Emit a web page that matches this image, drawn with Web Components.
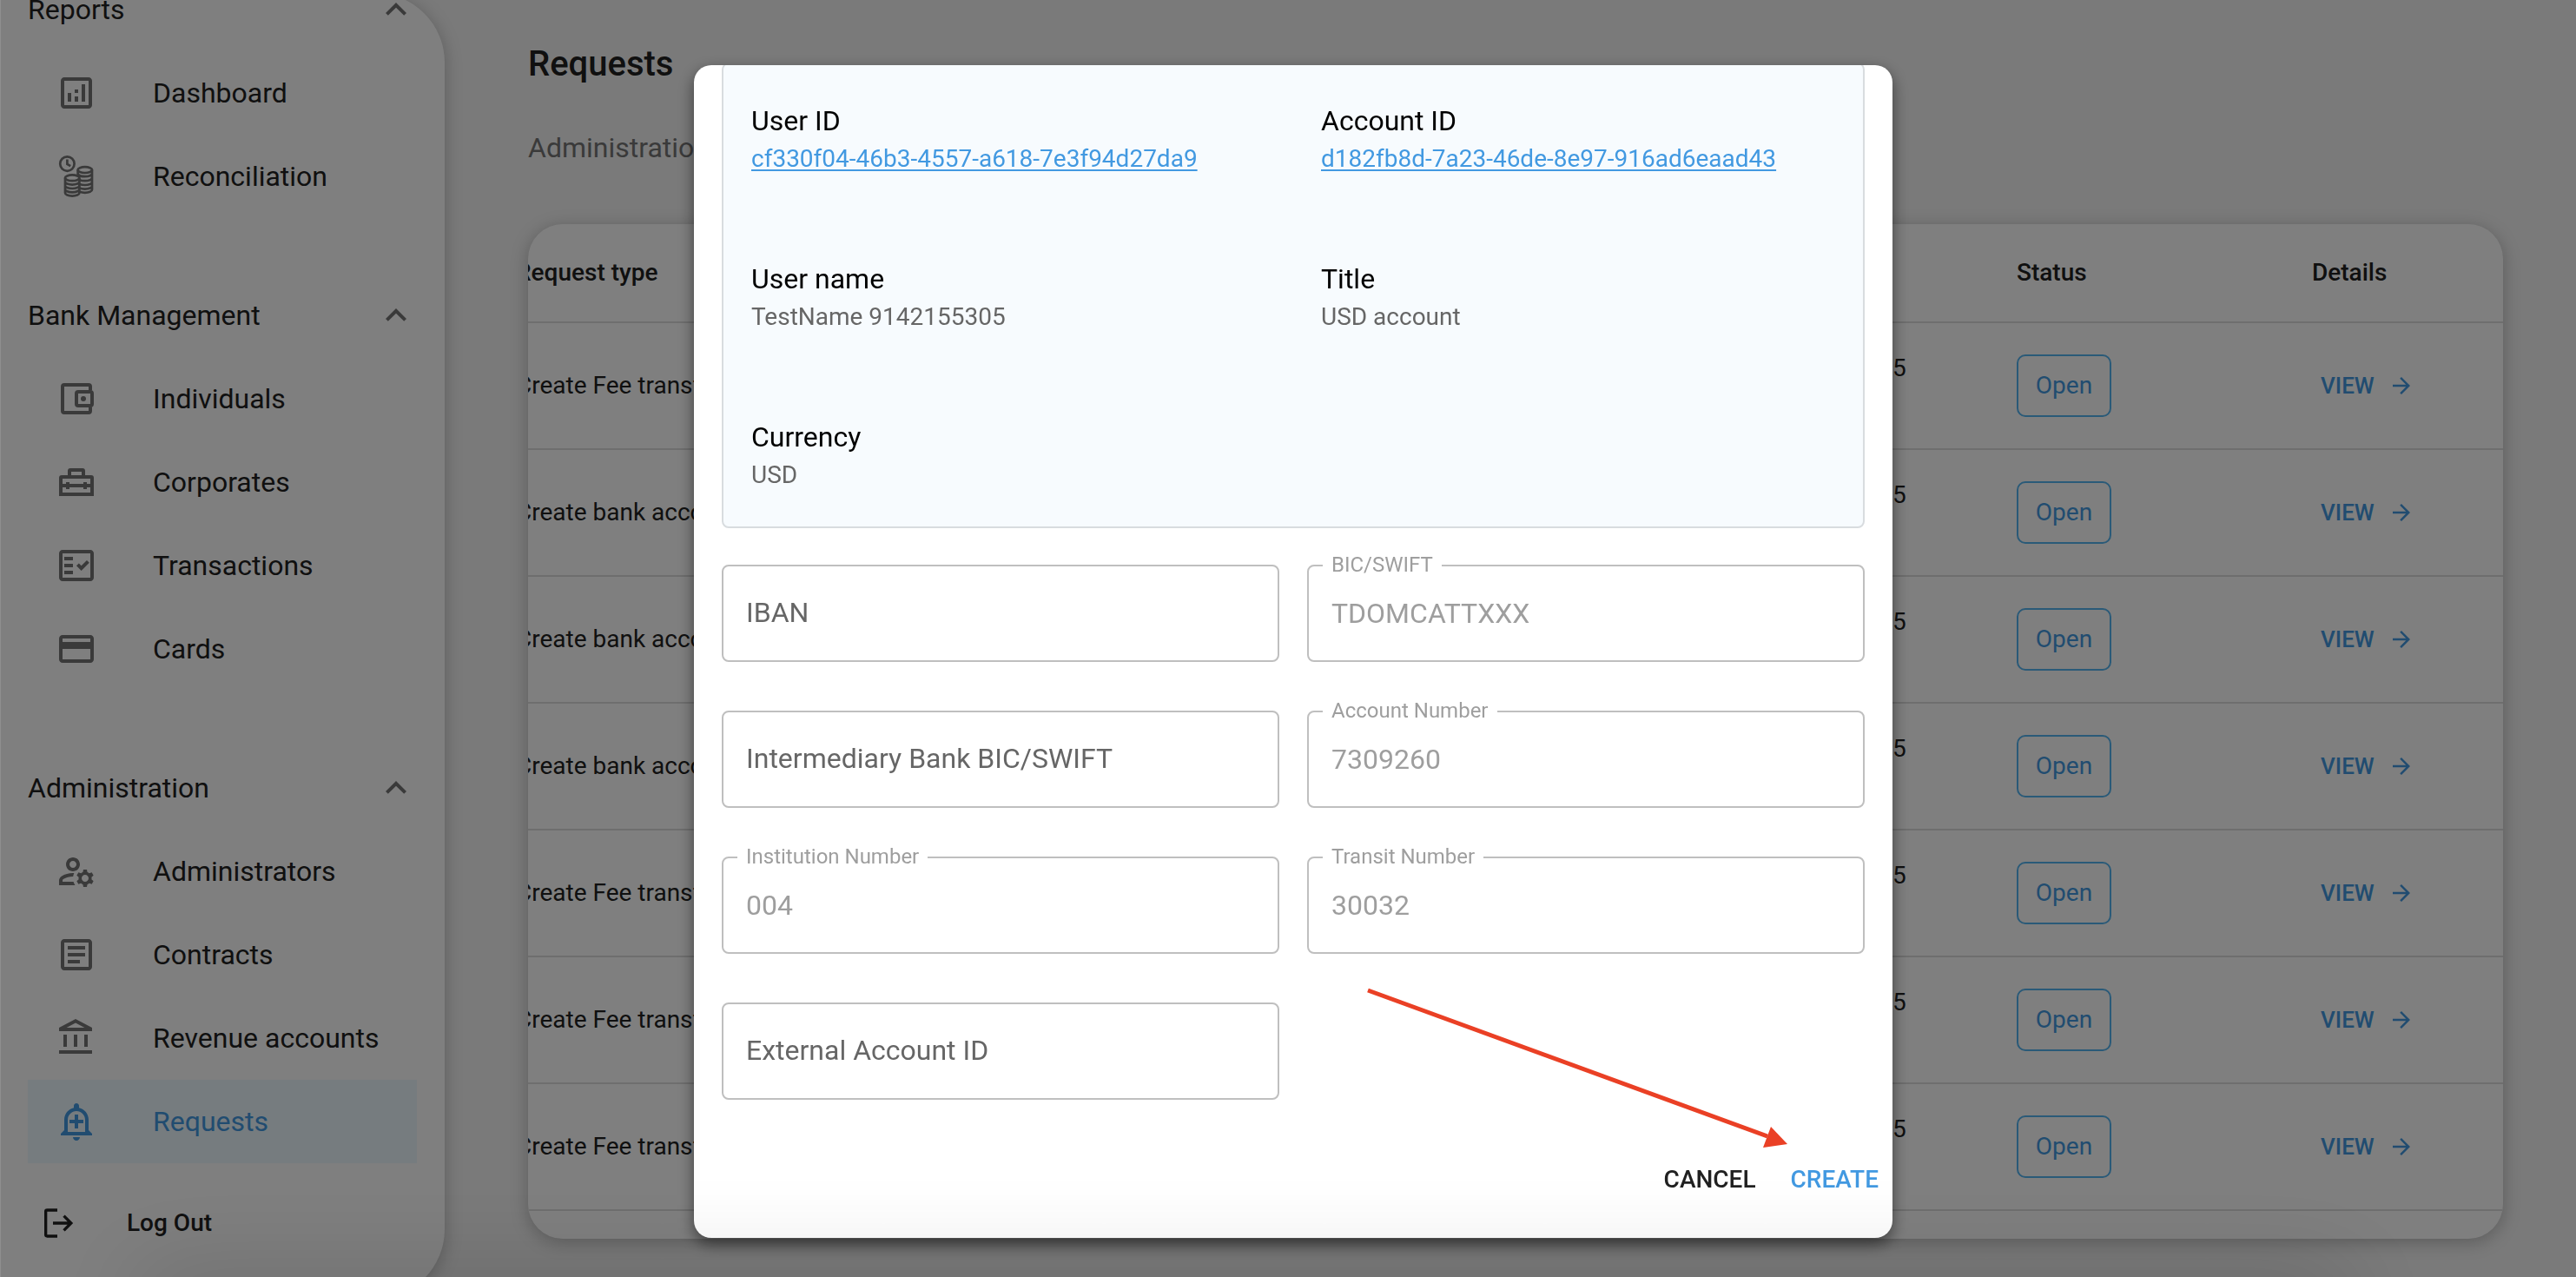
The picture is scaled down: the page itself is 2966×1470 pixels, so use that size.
<!DOCTYPE html>
<html lang="en">
<head>
<meta charset="utf-8">
<title>Requests</title>
<style>
html, body { margin: 0; height: 100%; overflow: hidden; }
body { font-family: Roboto, "Liberation Sans", sans-serif; font-size: 32px; line-height: 48px; color: #212121; background: #f4f4f4; }
</style>
</head>
<body>
<bank-app></bank-app>
<script>
const ICONS = {
  dashboard: '<path d="M9 17H7v-5h2v5zm4 0h-2v-3h2v3zm0-5h-2v-2h2v2zm4 5h-2V7h2v10zm2 2H5V5h14v14zm0-16H5c-1.1 0-2 .9-2 2v14c0 1.1.9 2 2 2h14c1.100 0 2-.9 2-2V5c0-1.100-.9-2-2-2z"/>',
  coins: '<g fill="none" stroke="currentColor" stroke-width="1.35"><circle cx="6.700" cy="4.800" r="4.100"/><path d="M6.700 2.300v2.700l1.900 1.100"/><ellipse cx="9.600" cy="12.900" rx="4.100" ry="1.700"/><path d="M5.500 12.900v8.600c0 1 1.800 1.800 4.100 1.800s4.100-.8 4.100-1.800v-8.600M5.500 15c0 1 1.800 1.800 4.100 1.800s4.100-.8 4.100-1.800M5.500 17.200c0 1 1.800 1.800 4.100 1.800s4.100-.8 4.100-1.800M5.500 19.400c0 1 1.800 1.800 4.100 1.800s4.100-.8 4.100-1.800"/><ellipse cx="16.900" cy="8.300" rx="4.100" ry="1.700"/><path d="M12.800 8.300v3M21 8.300v11.300c0 1-1.800 1.800-4.100 1.800-1.200 0-2.200-.2-3-.5M12.900 10.700c.4.900 2 1.400 4 1.400 2.300 0 4.100-.8 4.100-1.800M13.800 14.100c.8.300 1.900.5 3.100.5 2.300 0 4.100-.8 4.100-1.800M13.800 16.500c.8.300 1.900.5 3.100.5 2.300 0 4.100-.8 4.100-1.800M13.800 18.800c.8.300 1.900.5 3.100.5 2.300 0 4.100-.8 4.100-1.800"/></g>',
  wallet: '<path d="M20 7.200V5a1 1 0 0 0-1-1H5a1 1 0 0 0-1 1v14a1 1 0 0 0 1 1h14a1 1 0 0 0 1-1v-2.200" fill="none" stroke="currentColor" stroke-width="2"/><rect x="12" y="8" width="9" height="8" rx="1" fill="none" stroke="currentColor" stroke-width="2"/><circle cx="16" cy="12" r="1.500"/>',
  toolbox: '<path fill="none" stroke="currentColor" stroke-width="2" d="M3 19h18V9.500a.5.5 0 0 0-.5-.5h-17a.5.500 0 0 0-.5.5zM8 9V5.500a.5.5 0 0 1 .5-.5h7a.5.5 0 0 1 .5.5V9M3 14h18M7 12v4M17 12v4"/>',
  check: '<path d="M20 3H4c-1.100 0-2 .9-2 2v14c0 1.100.9 2 2 2h16c1.100 0 2-.9 2-2V5c0-1.100-.9-2-2-2zm0 16H4V5h16v14z" fill-rule="evenodd"/><path d="M19.410 10.420 17.990 9l-3.170 3.170-1.410-1.420L12 12.160 14.820 15zM5 7h5v2H5zM5 11h5v2H5zM5 15h5v2H5z"/>',
  card: '<path d="M20 4H4c-1.110 0-1.990.890-1.990 2L2 18c0 1.110.890 2 2 2h16c1.110 0 2-.890 2-2V6c0-1.110-.890-2-2-2zm0 14H4v-6h16v6zm0-10H4V6h16v2z"/>',
  admins: '<path d="M4 18v-.65c0-.34.16-.66.41-.81C6.100 15.530 8.030 15 10 15c.030 0 .050 0 .080.010.100-.700.300-1.370.590-1.980-.220-.020-.440-.030-.670-.030-2.420 0-4.680.670-6.610 1.820-.880.520-1.390 1.500-1.390 2.530V20h9.260c-.420-.600-.750-1.280-.970-2H4zM10 12c2.210 0 4-1.790 4-4s-1.790-4-4-4-4 1.790-4 4 1.790 4 4 4zm0-6c1.100 0 2 .9 2 2s-.9 2-2 2-2-.9-2-2 .9-2 2-2zM20.750 16c0-.220-.030-.420-.060-.630l1.140-1.010-1-1.730-1.450.490c-.320-.270-.680-.480-1.080-.630L18 11h-2l-.300 1.490c-.400.150-.760.360-1.080.630l-1.450-.490-1 1.730 1.140 1.010c-.030.210-.060.410-.060.630s.030.420.060.630l-1.140 1.010 1 1.730 1.450-.490c.320.270.680.480 1.080.630L16 21h2l.300-1.490c.400-.150.760-.360 1.080-.630l1.450.490 1-1.730-1.140-1.010c.030-.210.060-.410.060-.630zM17 18c-1.100 0-2-.9-2-2s.9-2 2-2 2 .9 2 2-.9 2-2 2z"/>',
  article: '<path d="M19 5v14H5V5h14m0-2H5c-1.100 0-2 .9-2 2v14c0 1.100.9 2 2 2h14c1.100 0 2-.9 2-2V5c0-1.100-.9-2-2-2zM14 17H7v-2h7v2zm3-4H7v-2h10v2zm0-4H7V7h10v2z"/>',
  bank: '<path d="M6.500 10h-2v7h2v-7zm6 0h-2v7h2v-7zm8.500 9H2v2h19v-2zm-2.500-9h-2v7h2v-7zm-7-6.740L16.710 6H6.290l5.210-2.740m0-2.260L2 6v2h19V6l-9.500-5z"/>',
  bell: '<path d="M10.010 21.010c0 1.100.890 1.990 1.990 1.990s1.990-.890 1.990-1.990h-3.980zM12 6c2.760 0 5 2.240 5 5v7H7v-7c0-2.760 2.240-5 5-5zm0-4.500c-.830 0-1.500.670-1.500 1.500v1.170C7.360 4.850 5 7.650 5 11v6l-2 2v1h18v-1l-2-2v-6c0-3.350-2.360-6.150-5.500-6.830V3c0-.830-.670-1.500-1.500-1.500zM13 8h-2v3H8v2h3v3h2v-3h3v-2h-3z"/>',
  logout: '<path fill="none" stroke="currentColor" stroke-width="2" d="M12 3H5a1 1 0 0 0-1 1v16a1 1 0 0 0 1 1h7M9 12h12M16.500 7l5 5-5 5"/>',
  up: '<path d="m12 8-6 6 1.410 1.410L12 10.830l4.590 4.580L18 14z"/>',
  forward: '<path d="m12 4-1.410 1.410L16.170 11H4v2h12.170l-5.580 5.590L12 20l8-8z"/>'
};
const define = (name, html, after) => {
  const t = document.createElement('template');
  t.innerHTML = html;
  customElements.define(name, class extends HTMLElement {
    constructor() {
      super();
      this.attachShadow({ mode: 'open' }).append(t.content.cloneNode(true));
    }
    connectedCallback() { if (after) after(this.shadowRoot, this); }
  });
};

define('ui-icon', `<style>
:host { display: block; flex: none; width: 48px; height: 48px; }
svg { display: block; width: 100%; height: 100%; overflow: visible; fill: currentColor; }
</style><svg viewBox="0 0 24 24" aria-hidden="true"></svg>`,
  (r, el) => { r.querySelector('svg').innerHTML = ICONS[el.getAttribute('name')] || ''; });

define('nav-item', `<style>
:host { display: block; }
a { display: flex; align-items: center; gap: 64px; height: 96px; padding: 0 32px; color: inherit; text-decoration: none; white-space: nowrap; }
ui-icon { color: #757575; }
:host([selected]) a { background: #edf8ff; color: #4299e1; }
:host([selected]) ui-icon { color: #4299e1; }
</style><a href="#"><ui-icon></ui-icon><slot></slot></a>`,
  (r, el) => {
    const icon = document.createElement('ui-icon');
    icon.setAttribute('name', el.getAttribute('icon'));
    r.querySelector('ui-icon').replaceWith(icon);
  });

define('nav-section', `<style>
:host { display: block; }
button { display: flex; align-items: center; justify-content: space-between; width: 100%; height: 96px; padding: 0; border: 0; background: none; font: inherit; color: inherit; }
ui-icon { color: #757575; }
</style><button type="button"><span></span><ui-icon name="up"></ui-icon></button><slot></slot>`,
  (r, el) => { r.querySelector('span').textContent = el.getAttribute('heading'); });

define('side-bar', `<style>
:host { display: block; flex: none; box-sizing: border-box; width: 512px; margin: -8px 0 -25px; padding: 0 32px; overflow: hidden; background: #fff; border-radius: 0 80px 80px 0; box-shadow: 0 4px 20px rgba(0,0,0,.25); }
nav { display: flex; flex-direction: column; gap: 64px; margin-top: -29px; }
.out { display: flex; align-items: center; gap: 60px; height: 96px; margin-top: 21px; padding: 0 14px; color: inherit; text-decoration: none; font-size: 28px; font-weight: 500; }
.out ui-icon { width: 40px; height: 40px; }
</style>
<nav>
<nav-section heading="Reports"><nav-item icon="dashboard">Dashboard</nav-item><nav-item icon="coins">Reconciliation</nav-item></nav-section>
<nav-section heading="Bank Management"><nav-item icon="wallet">Individuals</nav-item><nav-item icon="toolbox">Corporates</nav-item><nav-item icon="check">Transactions</nav-item><nav-item icon="card">Cards</nav-item></nav-section>
<nav-section heading="Administration"><nav-item icon="admins">Administrators</nav-item><nav-item icon="article">Contracts</nav-item><nav-item icon="bank">Revenue accounts</nav-item><nav-item icon="bell" selected>Requests</nav-item></nav-section>
</nav>
<a class="out" href="#"><ui-icon name="logout"></ui-icon><span>Log Out</span></a>`);

define('requests-table', `<style>
:host { display: block; padding-bottom: 32px; overflow: hidden; background: #fff; border-radius: 40px; box-shadow: 0 4px 20px rgba(0,0,0,.25); font-size: 28px; line-height: 40px; }
table { width: calc(100% + 46px); margin-left: -46px; table-layout: fixed; border-collapse: separate; border-spacing: 0; }
th, td { box-sizing: border-box; padding: 0 32px; border-bottom: 2px solid #dcdcdc; text-align: left; white-space: nowrap; }
th { height: 114px; font-weight: 500; }
td { height: 146px; }
.created { width: 143px; } .status { width: 340px; } .details { width: 252px; }
td.created { padding-bottom: 40px; }
.chip { display: inline-block; box-sizing: border-box; width: 109px; padding: 14px 0; border: 2px solid #54b4f0; border-radius: 10px; color: #4299e1; text-align: center; vertical-align: middle; }
button { display: flex; align-items: center; gap: 16px; padding: 0 10px; border: 0; background: none; color: #4299e1; font: inherit; font-size: 26px; font-weight: 500; line-height: 40px; }
button ui-icon { width: 30px; height: 30px; }
</style>
<table><thead><tr><th>Request type</th><th class="created"></th><th class="status">Status</th><th class="details">Details</th></tr></thead><tbody></tbody></table>`,
  r => {
    const fee = 'Create Fee transfer', bank = 'Create bank account';
    r.querySelector('tbody').innerHTML = [fee, bank, bank, bank, fee, fee, fee].map(t =>
      `<tr><td>${t}</td><td class="created">5</td><td><span class="chip">Open</span></td><td><button type="button">VIEW<ui-icon name="forward"></ui-icon></button></td></tr>`).join('');
  });

define('main-page', `<style>
:host { display: block; flex: 1; min-width: 0; padding: 48px 84px 0 96px; }
h1 { margin: 0; font-size: 40px; line-height: 52px; font-weight: 500; }
p { margin: 46px 0 64px; color: #757575; }
</style><h1>Requests</h1><p>Administration</p><requests-table></requests-table>`);

define('info-item', `<style>
:host { display: block; padding: 0 32px; }
dl, dd { margin: 0; }
dt { color: #000; }
dd { font-size: 28px; line-height: 40px; color: #666; }
::slotted(a) { color: #4299e1; text-decoration: underline; text-decoration-thickness: 2px; text-underline-offset: 3px; }
</style><dl><dt></dt><dd><slot></slot></dd></dl>`,
  (r, el) => { r.querySelector('dt').textContent = el.getAttribute('label'); });

define('text-field', `<style>
:host { display: grid; }
label, input { grid-area: 1 / 1; }
input { box-sizing: border-box; width: 100%; height: 112px; padding: 0 26px; border: 2px solid #bfbfbf; border-radius: 8px; background: none; font: inherit; color: #212121; }
input:disabled { color: #9e9e9e; -webkit-text-fill-color: #9e9e9e; opacity: 1; }
label { place-self: center start; margin: 0 0 2px 28px; color: #666; }
:host([value]) label { z-index: 1; place-self: start; margin: -12px 0 0 18px; padding: 0 10px; background: #fff; font-size: 24px; line-height: 24px; color: #9e9e9e; }
</style><label for="f"></label><input id="f" type="text">`,
  (r, el) => {
    r.querySelector('label').textContent = el.getAttribute('label');
    const v = el.getAttribute('value'), i = r.querySelector('input');
    if (v) { i.value = v; i.disabled = true; }
  });

define('request-dialog', `<style>
:host { display: flex; flex-direction: column; position: relative; box-sizing: border-box; width: min(1380px, 100% - 64px); height: 100%; padding: 0 32px; overflow: clip; background: #fff; border-radius: 20px; }
.info { display: grid; grid-template-columns: 1fr 1fr; row-gap: 94px; margin-top: -3px; padding: 41px 0 39px; border: 2px solid #d8dcdf; border-radius: 8px; background: #f7fbfe; }
form { display: grid; grid-template-columns: 1fr 1fr; gap: 56px 32px; margin-top: 42px; }
.actions { display: flex; justify-content: flex-end; gap: 8px; margin: 56px -32px 0 0; }
button { padding: 12px 16px; border: 0; background: none; font: inherit; font-size: 28px; line-height: 48px; font-weight: 500; color: #212121; }
.create { color: #4299e1; }
.arrow { position: absolute; right: 120px; bottom: 103px; width: 486px; height: 186px; }
</style>
<div class="info">
<info-item label="User ID"><a href="#">cf330f04-46b3-4557-a618-7e3f94d27da9</a></info-item>
<info-item label="Account ID"><a href="#">d182fb8d-7a23-46de-8e97-916ad6eaad43</a></info-item>
<info-item label="User name">TestName 9142155305</info-item>
<info-item label="Title">USD account</info-item>
<info-item label="Currency">USD</info-item>
</div>
<form>
<text-field label="IBAN"></text-field><text-field label="BIC/SWIFT" value="TDOMCATTXXX"></text-field>
<text-field label="Intermediary Bank BIC/SWIFT"></text-field><text-field label="Account Number" value="7309260"></text-field>
<text-field label="Institution Number" value="004"></text-field><text-field label="Transit Number" value="30032"></text-field>
<text-field label="External Account ID"></text-field>
</form>
<div class="actions"><button type="button">CANCEL</button><button class="create" type="button">CREATE</button></div>
<svg class="arrow" viewBox="0 0 486 186" aria-hidden="true"><path d="M2 4 462 172" stroke="#ea4025" stroke-width="5"/><path d="m485 181-19-20-9 24z" fill="#ea4025"/></svg>`);

define('modal-layer', `<style>
:host { position: fixed; inset: 0; display: grid; place-items: center; box-sizing: border-box; padding: 75px 0 45px 12px; background: rgba(0,0,0,.5); box-shadow: inset 1px 0 rgba(255,255,255,.12); }
::slotted(request-dialog), request-dialog { box-shadow: 0 7px 18px rgba(0,0,0,.5); }
.shade { position: fixed; left: 160px; right: 260px; top: 100%; height: 60px; box-shadow: 0 0 110px 4px rgba(0,0,0,.17); pointer-events: none; }
</style><slot></slot><div class="shade"></div>`);

define('bank-app', `<style>
:host { display: flex; height: 100%; }
</style><side-bar></side-bar><main-page></main-page><modal-layer><request-dialog role="dialog" aria-label="Create request"></request-dialog></modal-layer>`);
</script>
</body>
</html>
